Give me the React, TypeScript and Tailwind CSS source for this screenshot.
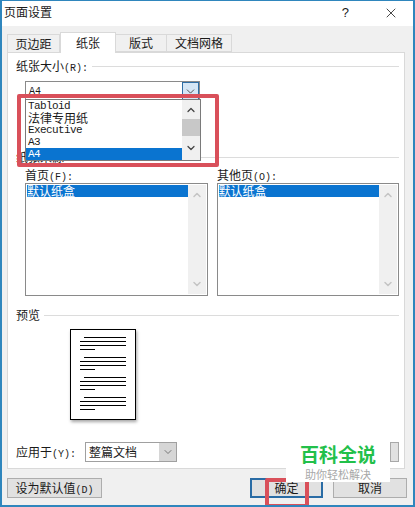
import { ChevronDown, ChevronUp, X } from 'lucide-react';

const cjk = "font-['Noto_Sans_CJK_SC','Liberation_Sans',sans-serif]";
const mono = "font-['Liberation_Mono','Noto_Sans_CJK_SC',monospace]";
const listLatin = `h-3 pl-[2px] text-[11px] leading-[13px] tracking-[-0.6px] ${mono}`;

// latin part of a label, half the width of the chinese glyphs
function Key({ children }: { children: string }) {
  return <span className={`text-[10px] ${mono}`}>{children}</span>;
}

function PaperLines() {
  return (
    <div className="flex flex-col">
      <div className="ml-[13px] h-px w-[42px] bg-black" />
      <div className="ml-[9px] mt-[3px] h-px w-[46px] bg-black" />
      <div className="ml-[9px] mt-[3px] h-px w-[46px] bg-black" />
      <div className="ml-[9px] mt-[3px] h-px w-[15px] bg-black" />
    </div>
  );
}

function TrayList() {
  return (
    <div className="flex h-[113px] flex-1 border border-[#8a8a8a] bg-white p-px">
      <div className="flex-1">
        <div className={`h-3 bg-[#0a74d0] text-[12px] leading-3 text-white ${cjk}`}>默认纸盒</div>
      </div>
      <div className="flex w-[18px] flex-col items-center justify-between bg-[#f0f0f0] py-1 text-[#c4c4c4]">
        <ChevronUp size={12} strokeWidth={3} />
        <ChevronDown size={12} strokeWidth={3} />
      </div>
    </div>
  );
}

export default function App() {
  return (
    <div className={`relative flex h-[507px] w-[415px] flex-col overflow-hidden border-x-2 border-t border-b-2 border-x-[#2f86bd] border-t-[#2f86bd] border-b-[#2f86bd] bg-[#f0f0f0] text-[12px] text-[#1a1a1a] ${cjk}`}>
      {/* title bar */}
      <div className="flex h-[25px] items-start justify-between bg-white pl-[2px] pr-[14px] pt-[2px]">
        <span className="text-[12px]">页面设置</span>
        <div className="flex items-center gap-[34px]">
          <span className="font-['Liberation_Sans',sans-serif] text-[13px]">?</span>
          <X size={16} strokeWidth={1.2} />
        </div>
      </div>

      {/* tabs */}
      <div className="flex h-[26px] items-end pl-[5px] pt-[7px]">
        <div className="flex h-[18px] w-[53px] items-center justify-center border border-b-0 border-[#d9d9d9] text-[12px]">页边距</div>
        <div className="z-10 -mb-px flex h-[21px] w-[56px] items-center justify-center border border-b-0 border-[#d9d9d9] bg-white text-[12px]">纸张</div>
        <div className="flex h-[18px] w-[51px] items-center justify-center border-y border-r border-[#d9d9d9] text-[12px]">版式</div>
        <div className="flex h-[18px] w-[65px] items-center justify-center border-y border-r border-[#d9d9d9] text-[12px]">文档网格</div>
      </div>

      {/* panel */}
      <div className="mx-[5px] flex h-[417px] w-[398px] flex-col border border-[#d9d9d9] bg-white pl-[8px] pr-[5px]">
        <div className="mt-[5px] flex h-[16px] items-center gap-1">
          <span>纸张大小<Key>(R):</Key></span>
          <div className="h-px flex-1 bg-[#dcdcdc]" />
        </div>
        <div className="ml-[9px] mt-[7px] flex h-[20px] w-[175px] border border-[#8a8a8a]">
          <span className={`flex-1 pl-[3px] text-[10px] leading-[19px] ${mono}`}>A4</span>
          <div className="flex w-[17px] items-center justify-center border border-[#2f6ea5] bg-[#d5e6f5]">
            <ChevronDown size={13} strokeWidth={1.5} className="text-[#333]" />
          </div>
        </div>

        {/* mostly hidden behind the open dropdown */}
        <div className="mt-[48px] flex h-[16px] items-center gap-1">
          <span>纸张来源</span>
          <div className="h-px flex-1 bg-[#dcdcdc]" />
        </div>
        <div className="ml-[9px] mt-[2px] flex h-[16px] items-center gap-[9px]">
          <span className="w-[183px]">首页<Key>(F):</Key></span>
          <span>其他页<Key>(O):</Key></span>
        </div>
        <div className="ml-[9px] flex gap-[9px]">
          <TrayList />
          <TrayList />
        </div>

        <div className="mt-[11px] flex h-[16px] items-center gap-1">
          <span>预览</span>
          <div className="h-px flex-1 bg-[#dcdcdc]" />
        </div>
        <div className="ml-[54px] mt-[6px] flex h-[91px] w-[66px] flex-col gap-[7px] border border-black bg-white pt-[7px] shadow-[1px_2px_3px_rgba(0,0,0,0.35)]">
          <PaperLines />
          <PaperLines />
          <PaperLines />
          <PaperLines />
        </div>

        <div className="mt-[22px] flex items-center">
          <span className="w-[69px]">应用于<Key>(Y):</Key></span>
          <div className="flex h-[20px] w-[92px] border border-[#a0a0a0]">
            <span className="flex-1 pl-[3px] leading-[18px]">整篇文档</span>
            <div className="flex w-[17px] items-center justify-center bg-[#d6d6d6]">
              <ChevronDown size={12} strokeWidth={1.5} className="text-[#555]" />
            </div>
          </div>
          <div className="ml-[213px] h-[20px] w-[9px] border border-[#a8a8a8] bg-[#e1e1e1]" />
        </div>
      </div>

      {/* bottom buttons */}
      <div className="mt-[9px] flex items-center pl-[5px]">
        <button className="h-[20px] w-[95px] border border-[#adadad] bg-[#e1e1e1] text-[12px] leading-[18px]">设为默认值<Key>(D)</Key></button>
        <button className="ml-[148px] h-[20px] w-[73px] border-2 border-[#2a6ca5] bg-[#e1e1e1] text-[12px] leading-[16px]">确定</button>
        <button className="ml-[10px] h-[20px] w-[74px] border border-[#adadad] bg-[#e1e1e1] text-[12px] leading-[18px]">取消</button>
      </div>

      {/* open dropdown */}
      <div className="absolute left-[23px] top-[98px] flex h-[62px] w-[176px] border border-[#7a7a7a] bg-white">
        <div className="w-[156px]">
          <div className={listLatin}>Tabloid</div>
          <div className="h-3 pl-[2px] text-[12px] leading-3">法律专用纸</div>
          <div className={listLatin}>Executive</div>
          <div className={listLatin}>A3</div>
          <div className={`${listLatin} bg-[#0a74d0] text-white`}>A4</div>
        </div>
        <div className="flex flex-1 flex-col items-center bg-[#f0f0f0] text-[#444]">
          <ChevronUp size={12} strokeWidth={2.5} className="mt-[4px]" />
          <div className="mt-[3px] h-[17px] w-full bg-[#c8c8c8]" />
          <ChevronDown size={12} strokeWidth={2.5} className="mt-[6px]" />
        </div>
      </div>

      {/* red annotations */}
      <div className="absolute left-[15px] top-[93px] h-[73px] w-[202px] rounded-[2px] border-[4px] border-[#d9505a]" />
      <div className="absolute left-[263px] top-[477px] h-[30px] w-[44px] rounded-[2px] border-[4px] border-[#d9505a]" />

      {/* watermark */}
      <div className="absolute left-[284px] top-[438px] flex h-[43px] w-[104px] flex-col items-center bg-white pt-[2px]">
        <span className="text-[19px] font-bold leading-[26px] text-[#22c04a]">百科全说</span>
        <span className="text-[11px] leading-[14px] text-[#a8a8a8]">助你轻松解决</span>
      </div>
    </div>
  );
}
